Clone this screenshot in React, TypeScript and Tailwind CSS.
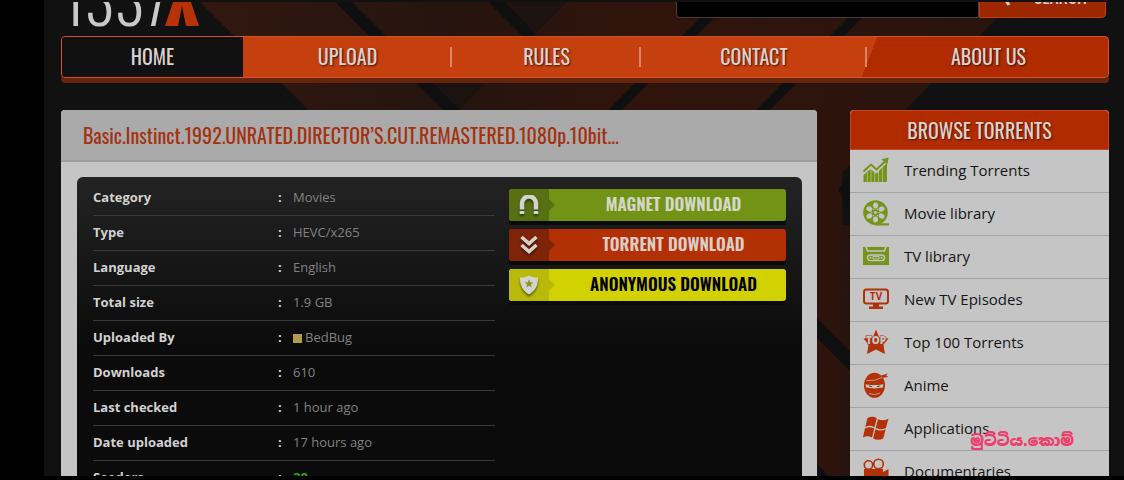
import type { ReactNode } from "react";

const OSWALD = "font-['Oswald','Liberation_Sans_Narrow',sans-serif]";

const navItems = ["HOME", "UPLOAD", "RULES", "CONTACT", "ABOUT US"];

const details: { label: string; value: ReactNode }[] = [
  { label: "Category", value: "Movies" },
  { label: "Type", value: "HEVC/x265" },
  { label: "Language", value: "English" },
  { label: "Total size", value: "1.9 GB" },
  {
    label: "Uploaded By",
    value: (
      <a href="#user" className="flex items-center gap-[3px]">
        <span className="size-[9px] bg-[#b39b4c]" />
        BedBug
      </a>
    ),
  },
  { label: "Downloads", value: "610" },
  { label: "Last checked", value: "1 hour ago" },
  { label: "Date uploaded", value: "17 hours ago" },
  { label: "Seeders", value: <span className="font-bold text-[#3f9c1c]">28</span> },
];

function Backdrop() {
  return (
    <svg
      className="absolute inset-0 h-full w-full"
      viewBox="0 0 1124 476"
      preserveAspectRatio="xMinYMin slice"
      aria-hidden="true"
    >
      <defs>
        <linearGradient id="beam" x1="0" x2="1" y1="0" y2="0">
          <stop offset="0" stopColor="#32180f" />
          <stop offset="0.3" stopColor="#25140f" />
          <stop offset="0.55" stopColor="#30140b" />
          <stop offset="1" stopColor="#28140e" />
        </linearGradient>
      </defs>
      <path d="M198 0H1015L842 173V480H800L680 480Z" fill="url(#beam)" />
      <path d="M842 225h10v255h-12z" fill="#28140e" />
      <path d="M503 0H569L459 110H458L416 68L537 34Z" fill="#1c1210" />
      <path
        d="M333 0h17l110 110h-17zM486 0h17l33 34-8 8zM718 0h14L612 120h-14zM866 0h14L762 118h-14zM817 318l40 40v20l-40-40zM817 464l20 20h-20z"
        fill="#0f0f0f"
      />
      <path d="M838 190l20-26v60z" fill="#100f0f" />
    </svg>
  );
}

function MagnetIcon() {
  return (
    <svg viewBox="0 0 20 20" className="size-5 drop-shadow-[0_2px_1px_rgba(0,0,0,0.5)]" aria-hidden="true">
      <path d="M3 14.500V8.500a7 7 0 0 1 14 0v6" fill="none" stroke="#d4d4cf" strokeWidth="4.500" />
      <path d="M.7 16h4.600v3H.7zM14.700 16h4.600v3h-4.600z" fill="#d4d4cf" />
    </svg>
  );
}

function ChevronsIcon() {
  return (
    <svg viewBox="0 0 20 20" className="size-5 drop-shadow-[0_2px_1px_rgba(0,0,0,0.5)]" aria-hidden="true">
      <path d="M2.500 2l7.500 6.500L17.500 2M2.500 10l7.500 6.500 7.500-6.500" fill="none" stroke="#d8cfcb" strokeWidth="3.600" />
    </svg>
  );
}

function ShieldIcon() {
  return (
    <svg viewBox="0 0 20 20" className="size-5 drop-shadow-[0_2px_1px_rgba(0,0,0,0.5)]" aria-hidden="true">
      <path d="M10 .5Q13 2.600 19 2.600C19.300 11 15.500 16.500 10 19.500 4.500 16.500.7 11 1 2.600 7 2.600 10 .5 10 .5Z" fill="#d4d4cf" />
      <path d="M10 4.300l1.200 2.900 3.100.2-2.400 2 .8 3L10 10.800l-2.700 1.600.8-3-2.400-2 3.100-.2z" fill="#8c9226" />
    </svg>
  );
}

function TrendingIcon() {
  return (
    <svg viewBox="0 0 26 26" className="size-[26px]" fill="#74951a" aria-hidden="true">
      <path d="M.5 25v-7l3.400-3v10zM4.500 25V14.300l3.200-2V25zM8.300 25V12.500l3.200 3V25zM12.100 25v-8.500l3.200-1V25zM15.900 25V14l3.200-3.300V25zM19.700 25V10.200L24 6v19z" />
      <path d="M.5 14.500L8 7.500l5.500 5L22 4.500" fill="none" stroke="#74951a" strokeWidth="2" />
      <path d="M18.500 2.200L25.700.5l-1.400 7z" />
    </svg>
  );
}

function ReelIcon() {
  return (
    <svg viewBox="0 0 26 26" className="size-[26px]" aria-hidden="true">
      <circle cx="12.500" cy="12.500" r="12.300" fill="#74951a" />
      <path d="M13 23.200h13v2.300H12z" fill="#74951a" />
      <g fill="#c5c5c5">
        {[0, 60, 120, 180, 240, 300].map((a) => (
          <ellipse key={a} cx="12.500" cy="5.400" rx="2.500" ry="3" transform={`rotate(${a} 12.500 12.500)`} />
        ))}
        {[30, 90, 150, 210, 270, 330].map((a) => (
          <circle key={a} cx="12.500" cy="8.800" r=".7" transform={`rotate(${a} 12.500 12.500)`} />
        ))}
        <circle cx="12.500" cy="12.500" r="1.500" />
      </g>
    </svg>
  );
}

function CassetteIcon() {
  return (
    <svg viewBox="0 0 26 26" className="size-[26px]" aria-hidden="true">
      <path d="M0 4h26v18H0z" fill="#74951a" />
      <g fill="none" stroke="#c5c5c5" strokeWidth="1.400">
        <path d="M3 3.500l1.500 4.500h17L23 3.500" />
        <rect x="4.500" y="12" width="17" height="5.600" rx="2.800" />
        <path d="M10 13.600h6v2.400h-6z" strokeWidth="1" />
      </g>
      <circle cx="7.500" cy="14.800" r="1" fill="#c5c5c5" />
      <circle cx="18.500" cy="14.800" r="1" fill="#c5c5c5" />
    </svg>
  );
}

function TvIcon() {
  return (
    <svg viewBox="0 0 26 26" className="size-[26px]" aria-hidden="true">
      <rect x="1" y="3.500" width="24" height="14" rx="2.500" fill="none" stroke="#b23108" strokeWidth="2" />
      <path d="M10 18h6v2.500h4V23H6v-2.500h4z" fill="#b23108" />
      <text x="13" y="14.200" textAnchor="middle" fontSize="10" fontWeight="700" fontFamily="Open Sans" fill="#b23108">
        TV
      </text>
    </svg>
  );
}

function TopIcon() {
  return (
    <svg viewBox="0 0 26 26" className="size-[26px]" aria-hidden="true">
      <path d="M13 .5l3.300 8.300 9.200.6-5 6 1.400 9.600L13 20.500 4.100 25l1.400-9.600-5-6 9.200-.6z" fill="#b23108" />
      <text
        x="13"
        y="15"
        textAnchor="middle"
        fontSize="10"
        fontWeight="800"
        fontFamily="Open Sans"
        fill="#c5c5c5"
        stroke="#b23108"
        strokeWidth="1.200"
        paintOrder="stroke"
      >
        TOP
      </text>
    </svg>
  );
}

function NinjaIcon() {
  return (
    <svg viewBox="0 0 26 26" className="size-[26px]" aria-hidden="true">
      <ellipse cx="11.500" cy="13.300" rx="10.500" ry="12.500" fill="#b23108" />
      <path d="M18 3.500l7-2-2 2.200 2.500 1.300-6 .8z" fill="#b23108" />
      <path d="M2.500 12.200q9 1.800 18 0l-.6 3.400q-8.400 1.600-16.800 0z" fill="#c5c5c5" />
      <path d="M5.500 13.400l4 .8-1 .9q-2 0-3-1.700zM17.500 13.400l-4 .8 1 .9q2 0 3-1.700z" fill="#7a2408" />
      <path d="M3.500 8.500Q12 9.500 19 5.500M6 21.500q6 2.500 11-.5" fill="none" stroke="#c5c5c5" strokeWidth=".7" />
    </svg>
  );
}

function FlagIcon() {
  return (
    <svg viewBox="0 0 26 26" className="size-[26px]" fill="#b23108" aria-hidden="true">
      <path d="M4.500 3q5-2.500 9.300.2l-2.300 9q-4.500-2.600-9.300-.3zM15 4.200q5 2.400 10.500-.5l-2.600 9.200q-5 2.500-10.200.2zM1.900 13.400q4.800-2.400 9.300.2L9 22.600q-4.500-2.700-9-.2zM12.400 14.300q5 2.400 10.200-.1l-2.300 9.200q-5 2.800-10.200.2z" />
    </svg>
  );
}

function CameraIcon() {
  return (
    <svg viewBox="0 0 26 26" className="size-[26px]" aria-hidden="true">
      <g fill="none" stroke="#b23108" strokeWidth="1.600">
        <circle cx="5.500" cy="7" r="4.200" />
        <circle cx="15.500" cy="6" r="4.800" />
      </g>
      <path d="M1 11h19v3l5.500-3v12L20 20v3H1z" fill="#b23108" />
    </svg>
  );
}

const categories: { label: string; icon: ReactNode }[] = [
  { label: "Trending Torrents", icon: <TrendingIcon /> },
  { label: "Movie library", icon: <ReelIcon /> },
  { label: "TV library", icon: <CassetteIcon /> },
  { label: "New TV Episodes", icon: <TvIcon /> },
  { label: "Top 100 Torrents", icon: <TopIcon /> },
  { label: "Anime", icon: <NinjaIcon /> },
  { label: "Applications", icon: <FlagIcon /> },
  { label: "Documentaries", icon: <CameraIcon /> },
];

function DownloadLink(props: { label: string; icon: ReactNode; body: string; tab: string; arrow: string }) {
  return (
    <a
      href="#download"
      className={`flex h-8 items-stretch overflow-hidden rounded-[3px] text-[17px] font-semibold shadow-[0_4px_0_#0a0a0a] ${OSWALD} ${props.body}`}
    >
      <span className={`flex w-10 shrink-0 items-center justify-center ${props.tab}`}>{props.icon}</span>
      <svg viewBox="0 0 6 32" className={`w-[6px] shrink-0 ${props.arrow}`} aria-hidden="true">
        <path d="M0 10l6 6-6 6z" />
      </svg>
      <span className="flex flex-1 items-center justify-center whitespace-nowrap pb-[2px] pl-[6px]">{props.label}</span>
    </a>
  );
}

export default function App() {
  return (
    <div className="relative flex h-screen overflow-hidden border-b-4 border-black bg-[#111111] font-['Open_Sans',sans-serif]">
      <Backdrop />
      <div className="relative w-11 shrink-0 bg-black" />
      <div className="relative min-w-0 flex-1 border-t-2 border-[#111111] pl-[17px] pr-[15px]">
        <header className="flex h-[34px] items-start justify-between overflow-hidden">
          <a href="#home" className="-mt-9 flex items-end" aria-label="1337X">
            <span className={`w-[104px] pl-[2px] text-[62px] font-light leading-[64px] text-[#c9c9c9] ${OSWALD}`}>1337</span>
            <svg viewBox="0 0 34 40" className="mb-1 h-10 w-[34px]" aria-hidden="true">
              <path d="M8 16L4 0h9l4 10 4-10h9l-4 16 8 24H21l-4-20-4 20H0z" fill="#b83207" />
            </svg>
          </a>
          <form className="-mt-7 mr-[3px] flex h-11 w-[430px]">
            <input
              aria-label="Search"
              className="min-w-0 flex-1 rounded-l border border-[#4a3a34] bg-black px-3 text-white outline-none"
            />
            <button
              type="button"
              className={`flex w-[127px] items-center justify-center gap-4 rounded-r border border-[#c03f18] bg-[#9c2700] text-lg text-[#d8cfcb] ${OSWALD}`}
            >
              <svg viewBox="0 0 20 20" className="size-5" fill="none" stroke="#d8d8d8" strokeWidth="3" aria-hidden="true">
                <circle cx="12" cy="8" r="5" />
                <path d="M9 11l-2 2 4 6" />
              </svg>
              SEARCH
            </button>
          </form>
        </header>

        <nav
          className={`rounded border border-[#d0532a] bg-[linear-gradient(111deg,#c6400f_76.8%,#b02c00_76.8%)] text-xl text-[#dcd3cf] shadow-[0_5px_0_#66230d] ${OSWALD}`}
        >
          <ul className="grid h-10 grid-cols-[181fr_209fr_189fr_226fr_241fr]">
            {navItems.map((item, i) => (
              <li
                key={item}
                className={
                  i === 0
                    ? "flex items-center rounded-l-[3px] bg-[#111111]"
                    : "flex items-center pl-[2px] [text-shadow:1px_1px_2px_rgba(0,0,0,0.7)]"
                }
              >
                <a href="#nav" className="flex-1 pb-[2px] text-center">
                  {item}
                </a>
                {i > 0 && i < 4 && <span className="h-5 w-[2px] bg-[#d98667]" />}
              </li>
            ))}
          </ul>
        </nav>

        <div className="mt-8 flex items-start gap-[33px]">
          <main className="min-w-0 flex-1 rounded bg-[#c5c5c5]">
            <div className="rounded-t border-b-2 border-[#9d9d9d] bg-[#aaaaaa] px-[22px]">
              <h1 className={`truncate text-xl leading-[50px] text-[#a33210] ${OSWALD}`}>
                Basic.Instinct.1992.UNRATED.DIRECTOR’S.CUT.REMASTERED.1080p.10bit...
              </h1>
            </div>
            <div className="pl-4 pr-[15px] pt-[15px]">
              <div className="grid grid-cols-[402fr_277fr] items-start gap-[14px] rounded-t-md bg-[linear-gradient(#232323,#0b0b0b_170px)] px-4 pb-8 pt-1">
                <table className="w-full table-fixed border-separate border-spacing-0 text-[13px]">
                  <tbody>
                    {details.map((d) => (
                      <tr key={d.label} className="h-[35px]">
                        <th scope="row" className="w-[185px] border-b border-[#3a3a3a] p-0 text-left font-bold text-[#d2d2d2]">
                          {d.label}
                        </th>
                        <td className="w-[15px] border-b border-[#3a3a3a] p-0 font-bold text-[#d2d2d2]">:</td>
                        <td className="border-b border-[#3a3a3a] p-0 text-[#828282]">{d.value}</td>
                      </tr>
                    ))}
                  </tbody>
                </table>
                <div className="flex flex-col gap-2 pt-2">
                  <DownloadLink
                    label="MAGNET DOWNLOAD"
                    icon={<MagnetIcon />}
                    body="bg-[#739316] text-[#d5d8c8]"
                    tab="bg-[#577112]"
                    arrow="fill-[#577112]"
                  />
                  <DownloadLink
                    label="TORRENT DOWNLOAD"
                    icon={<ChevronsIcon />}
                    body="bg-[#b32f04] text-[#dccdc7]"
                    tab="bg-[#7d2409]"
                    arrow="fill-[#7d2409]"
                  />
                  <DownloadLink
                    label="ANONYMOUS DOWNLOAD"
                    icon={<ShieldIcon />}
                    body="bg-[#d2d102] text-black"
                    tab="bg-[#b9b90a]"
                    arrow="fill-[#b9b90a]"
                  />
                </div>
              </div>
            </div>
          </main>

          <aside className="w-[259px] shrink-0 rounded bg-[#c5c5c5]">
            <h2
              className={`rounded-t border border-[#c8461c] bg-[#b02c00] text-center text-xl leading-[38px] text-[#dcd3cf] [text-shadow:1px_1px_2px_rgba(0,0,0,0.6)] ${OSWALD}`}
            >
              BROWSE TORRENTS
            </h2>
            <ul>
              {categories.map((c) => (
                <li key={c.label} className="border-b border-[#a3a3a3]">
                  <a
                    href="#category"
                    className="flex h-[42px] items-center gap-[15px] px-[13px] pb-[2px] text-[15px] text-[#151515]"
                  >
                    {c.icon}
                    {c.label}
                  </a>
                </li>
              ))}
            </ul>
          </aside>
        </div>
      </div>
      <p className="absolute bottom-6 right-[50px] font-['Noto_Sans_Sinhala','Noto_Sans',sans-serif] text-[15px] font-black text-[#ee3d6c]">
        මුට්ටිය.කොම්
      </p>
    </div>
  );
}
